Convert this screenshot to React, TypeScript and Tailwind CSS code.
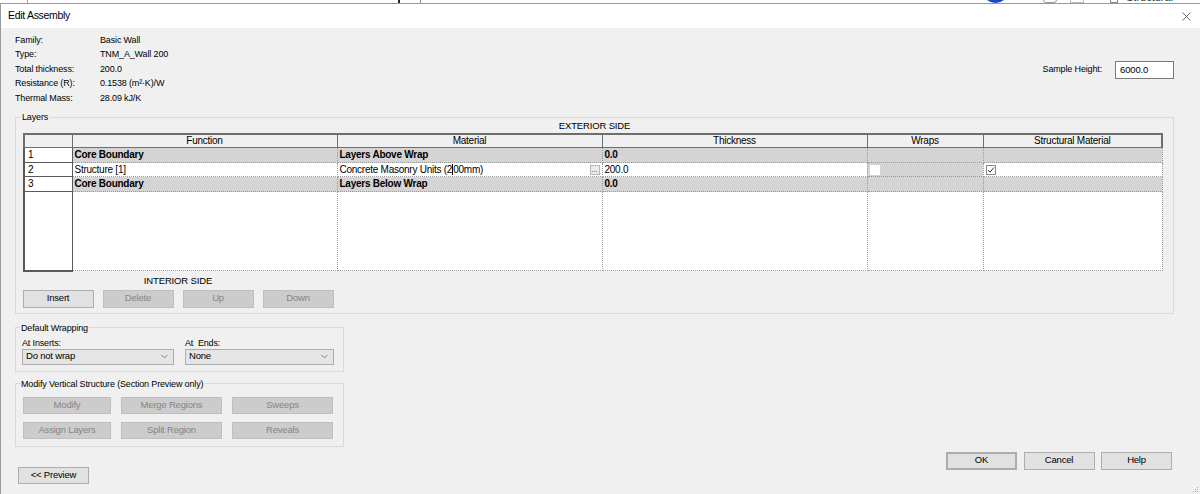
import { ChevronDown, X } from 'lucide-react'
import clsx from 'clsx'

const info: [string, string][] = [
  ['Family:', 'Basic Wall'],
  ['Type:', 'TNM_A_Wall 200'],
  ['Total thickness:', '200.0'],
  ['Resistance (R):', '0.1538 (m²·K)/W'],
  ['Thermal Mass:', '28.09 kJ/K'],
]

const headers = ['', 'Function', 'Material', 'Thickness', 'Wraps', 'Structural Material']
const colWidths = ['w-[48px]', 'w-[265px]', 'w-[265px]', 'w-[265px]', 'w-[116px]', 'w-[179px]']

function Btn({
  label,
  disabled,
  primary,
  className,
}: {
  label: string
  disabled?: boolean
  primary?: boolean
  className?: string
}) {
  return (
    <button
      type="button"
      className={clsx(
        'flex items-center justify-center text-[9.5px] tracking-[-0.2px]',
        disabled
          ? 'border border-[#bfbfbf] bg-[#cccccc] text-[#858585]'
          : 'border border-[#adadad] bg-[#e1e1e1] text-black',
        primary && 'border-2 border-[#0078d7]',
        className,
      )}
    >
      {label}
    </button>
  )
}

function Check({ checked }: { checked?: boolean }) {
  return (
    <span className="flex h-[10px] w-[10px] items-center justify-center border border-[#8a8a8a] bg-white">
      {checked && (
        <svg width="8" height="8" viewBox="0 0 8 8">
          <path d="M1 4.2 L3 6.2 L7 1.4" fill="none" stroke="#333" strokeWidth="1" />
        </svg>
      )}
    </span>
  )
}

function Select({ value }: { value: string }) {
  return (
    <div className="flex h-[16px] items-center justify-between border border-[#acacac] bg-[#e5e5e5] px-[3px] text-[9.5px] tracking-[-0.2px]">
      <span>{value}</span>
      <ChevronDown size={11} strokeWidth={1.3} color="#444" />
    </div>
  )
}

function LayersTable() {
  const dataCell = 'border border-dotted border-[#9a9a9a] px-[2px] py-0 align-middle whitespace-nowrap'
  const numCell = 'border border-solid border-[#5a5a5a] border-l-2 px-[3px] py-0 align-middle text-left'
  return (
    <table className="w-[1138px] table-fixed border-collapse text-[10px] leading-[12px] tracking-[-0.25px]">
      <colgroup>
        {colWidths.map((w, i) => (
          <col key={i} className={w} />
        ))}
      </colgroup>
      <thead>
        <tr className="h-[12px] bg-[#f0f0f0]">
          {headers.map((h, i) => (
            <th
              key={i}
              className={clsx(
                'border border-t-2 border-solid border-[#6e6e6e] p-0 text-center font-normal',
                i === 0 && 'border-l-2',
                i === 5 && 'border-r-2',
              )}
            >
              {h}
            </th>
          ))}
        </tr>
      </thead>
      <tbody>
        <tr className="h-[15px] bg-[#d4d4d4] font-bold">
          <td className={clsx(numCell, 'bg-white font-normal')}>1</td>
          <td className={dataCell}>Core Boundary</td>
          <td className={dataCell}>Layers Above Wrap</td>
          <td className={dataCell}>0.0</td>
          <td className={dataCell} />
          <td className={dataCell} />
        </tr>
        <tr className="h-[14px] bg-white">
          <td className={numCell}>2</td>
          <td className={dataCell}>Structure [1]</td>
          <td className={dataCell}>
            <div className="flex items-center justify-between">
              <span className="flex items-center">
                Concrete Masonry Units (2
                <span className="inline-block h-[11px] w-px bg-black" />
                00mm)
              </span>
              <span className="flex h-[10px] w-[10px] items-end justify-center border border-[#b8b8b8] bg-[#ececec] pb-[1px] text-[7px] leading-[6px] tracking-normal">
                ...
              </span>
            </div>
          </td>
          <td className={dataCell}>200.0</td>
          <td className={clsx(dataCell, 'bg-[#d4d4d4]')}>
            <span className="block h-[10px] w-[10px] bg-white" />
          </td>
          <td className={dataCell}>
            <Check checked />
          </td>
        </tr>
        <tr className="h-[15px] bg-[#d4d4d4] font-bold">
          <td className={clsx(numCell, 'bg-white font-normal')}>3</td>
          <td className={dataCell}>Core Boundary</td>
          <td className={dataCell}>Layers Below Wrap</td>
          <td className={dataCell}>0.0</td>
          <td className={dataCell} />
          <td className={dataCell} />
        </tr>
        <tr className="h-[79px] bg-white">
          <td className={clsx(numCell, 'border-b-2')} />
          <td className={dataCell} />
          <td className={dataCell} />
          <td className={dataCell} />
          <td className={dataCell} />
          <td className={dataCell} />
        </tr>
      </tbody>
    </table>
  )
}

export default function App() {
  return (
    <div className="h-[494px] w-[1200px] overflow-hidden bg-[#f0f0f0] font-['Liberation_Sans',Arial,sans-serif] text-black">
      {/* background window peeking above the dialog */}
      <div className="relative h-[3px] overflow-hidden bg-white">
        <span className="absolute top-0 left-[27px] h-[3px] w-px bg-[#a0a0a0]" />
        <span className="absolute top-0 left-[398px] h-[3px] w-[2px] bg-[#222]" />
        <span className="absolute top-0 left-[420px] h-[3px] w-px bg-[#888]" />
        <span className="absolute -top-[24px] left-[982px] h-[27px] w-[27px] rounded-full bg-[#1b46c8]" />
        <span className="absolute -top-[8px] left-[1043px] h-[11px] w-[14px] rounded-[3px] border border-[#9a9a9a]" />
        <span className="absolute -top-[8px] left-[1070px] h-[11px] w-[14px] border border-[#c0c0c0]" />
        <span className="absolute -top-[8px] left-[1110px] h-[11px] w-[8px] border border-[#888]" />
        <span className="absolute -top-[8px] left-[1126px] text-[11px] leading-[11px] text-[#333]">Structural Plans</span>
      </div>

      <div className="relative flex h-[491px] flex-col border-t border-l border-[#9a9a9a]">
        {/* title bar */}
        <div className="flex h-[24px] items-center justify-between bg-white pr-[6px] pl-[7px]">
          <span className="text-[10.5px] tracking-[-0.3px]">Edit Assembly</span>
          <X size={15} strokeWidth={1} color="#111" />
        </div>

        <div className="flex flex-1 flex-col pr-[26px] pl-[14px] text-[9px] tracking-[-0.15px]">
          {/* properties */}
          <div className="flex h-[83px] shrink-0 justify-between pt-[5px]">
            <div className="grid grid-cols-[85px_auto] auto-rows-[14.5px] items-center">
              {info.map(([k, v]) => (
                <div key={k} className="contents">
                  <span>{k}</span>
                  <span>{v}</span>
                </div>
              ))}
            </div>
            <div className="mt-[28px] flex h-[18px] items-center gap-[13px]">
              <span>Sample Height:</span>
              <div className="flex h-[18px] w-[59px] items-center border border-[#7a7a7a] bg-white pl-[4px] text-[9.5px]">
                6000.0
              </div>
            </div>
          </div>

          {/* Layers */}
          <fieldset className="border border-[#d9d9d9] px-[7px] pb-[5px]">
            <legend className="-ml-[3px] px-[2px] leading-[12px]">Layers</legend>
            <div className="-mt-[4px] flex h-[14px] items-center justify-center text-[9.5px]">EXTERIOR SIDE</div>
            <LayersTable />
            <div className="mt-[3px] flex w-[310px] flex-col items-center">
              <span className="flex h-[14px] items-center text-[9.5px]">INTERIOR SIDE</span>
              <div className="mt-[1px] flex gap-[9px]">
                <Btn label="Insert" className="h-[18px] w-[71px]" />
                <Btn label="Delete" disabled className="h-[18px] w-[71px]" />
                <Btn label="Up" disabled className="h-[18px] w-[71px]" />
                <Btn label="Down" disabled className="h-[18px] w-[71px]" />
              </div>
            </div>
          </fieldset>

          {/* lower part */}
          <div className="flex">
            <div className="flex w-[329px] flex-col">
              <fieldset className="mt-[8px] border border-[#d9d9d9] px-[6px] pb-[6px]">
                <legend className="-ml-[2px] px-[1px] leading-[12px]">Default Wrapping</legend>
                <div className="mt-[3px] grid grid-cols-[152px_149px] gap-x-[11px]">
                  <span className="leading-[12px]">At Inserts:</span>
                  <span className="leading-[12px]">At&nbsp; Ends:</span>
                  <Select value="Do not wrap" />
                  <Select value="None" />
                </div>
              </fieldset>

              <fieldset className="mt-[6px] border border-[#d9d9d9] px-[7px] pb-[7px]">
                <legend className="-ml-[3px] px-[1px] leading-[12px]">Modify Vertical Structure (Section Preview only)</legend>
                <div className="mt-[7px] grid grid-cols-[88px_101px_101px] gap-x-[10px] gap-y-[8px]">
                  <Btn label="Modify" disabled className="h-[17px]" />
                  <Btn label="Merge Regions" disabled className="h-[17px]" />
                  <Btn label="Sweeps" disabled className="h-[17px]" />
                  <Btn label="Assign Layers" disabled className="h-[17px]" />
                  <Btn label="Split Region" disabled className="h-[17px]" />
                  <Btn label="Reveals" disabled className="h-[17px]" />
                </div>
              </fieldset>

              <Btn label="<< Preview" className="mt-[20px] ml-[3px] h-[17px] w-[71px]" />
            </div>

            <div className="flex flex-1 items-end justify-end pr-[2px] pb-[14px]">
              <div className="flex gap-[6.5px]">
                <Btn label="OK" primary className="h-[18px] w-[71px]" />
                <Btn label="Cancel" className="h-[18px] w-[71px]" />
                <Btn label="Help" className="h-[18px] w-[71px]" />
              </div>
            </div>
          </div>
        </div>

        {/* size grip */}
        <svg className="absolute right-[1px] bottom-[1px]" width="7" height="7" viewBox="0 0 7 7">
          <rect x="5" y="1" width="1" height="1" fill="#b0b0b0" />
          <rect x="3" y="3" width="1" height="1" fill="#b0b0b0" />
          <rect x="5" y="3" width="1" height="1" fill="#b0b0b0" />
          <rect x="1" y="5" width="1" height="1" fill="#b0b0b0" />
          <rect x="3" y="5" width="1" height="1" fill="#b0b0b0" />
          <rect x="5" y="5" width="1" height="1" fill="#b0b0b0" />
        </svg>
      </div>
    </div>
  )
}
